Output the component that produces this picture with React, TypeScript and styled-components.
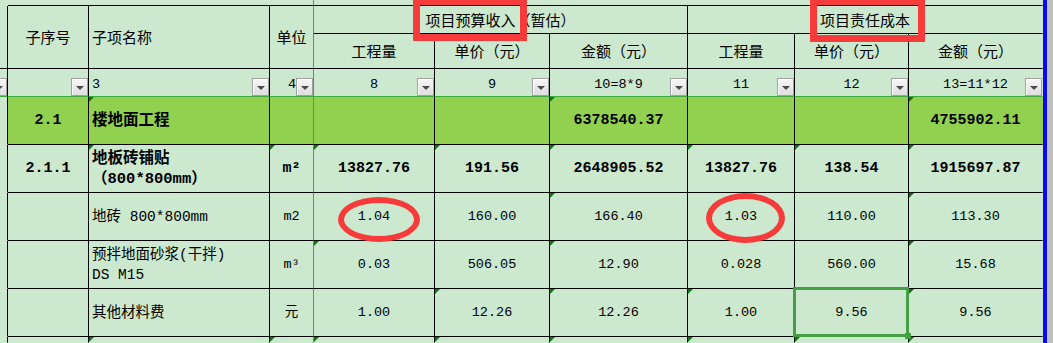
import styled, { createGlobalStyle, css } from "styled-components";

const GlobalStyle = createGlobalStyle`
  html, body {
    margin: 0;
    padding: 0;
  }
  body {
    background: #cce8cf;
    overflow: hidden;
  }
`;

const colWidths = [8, 81, 181, 44, 121, 115, 138, 107, 114, 134];
const rowHeights = [6, 28, 35, 28, 48, 48, 48, 48, 48, 6];

type Line = "black" | "green" | "none";
type Align = "left" | "center" | "right";

const lineColor = (l: Line) =>
  l === "green" ? "#3fa83f" : l === "none" ? "transparent" : "#000";

const Page = styled.div`
  display: flex;
  width: 1053px;
  height: 343px;
  overflow: hidden;
  background: #cce8cf;
`;

const Sheet = styled.div`
  position: relative;
  flex: none;
  display: grid;
  grid-template-columns: ${colWidths.map((w) => `${w}px`).join(" ")};
  grid-template-rows: ${rowHeights.map((h) => `${h}px`).join(" ")};
`;

const FrameEdge = styled.div`
  flex: none;
  width: 4px;
  background: #0a0af2;
`;

const Gutter = styled.div`
  flex: 1;
  background: #c0c0c0;
`;

const Cell = styled.div<{
  $span?: number;
  $rows?: number;
  $right?: Line;
  $bottom?: Line;
  $align?: Align;
  $fill?: "light" | "bright";
  $flag?: boolean;
  $selected?: boolean;
}>`
  position: relative;
  box-sizing: border-box;
  grid-column: span ${(p) => p.$span ?? 1};
  grid-row: span ${(p) => p.$rows ?? 1};
  display: flex;
  align-items: center;
  justify-content: ${(p) =>
    p.$align === "left" ? "flex-start" : p.$align === "right" ? "flex-end" : "center"};
  padding-left: ${(p) => (p.$align === "left" ? "3px" : "0")};
  min-width: 0;
  border-right: 1px solid ${(p) => lineColor(p.$right ?? "black")};
  border-bottom: 1px solid ${(p) => lineColor(p.$bottom ?? "black")};
  background: ${(p) => (p.$fill === "bright" ? "#92d050" : "#cce8cf")};
  color: #000;
  white-space: pre-line;

  ${(p) =>
    p.$flag &&
    css`
      &::before {
        content: "";
        position: absolute;
        top: 0;
        left: 0;
        border-top: 5px solid #0b7a0b;
        border-right: 5px solid transparent;
      }
    `}

  ${(p) =>
    p.$selected &&
    css`
      &::after {
        content: "";
        position: absolute;
        top: -2px;
        left: -2px;
        right: -1px;
        bottom: -1px;
        border: 3px solid #45a045;
        z-index: 2;
        pointer-events: none;
      }
    `}
`;

const HeadCell = styled(Cell)`
  font-family: "Noto Sans CJK SC", sans-serif;
  font-size: 15px;
  line-height: 20px;
`;

const FilterCell = styled(Cell)`
  font-family: "Liberation Mono", monospace;
  font-size: 13.5px;
  padding-top: 3px;
  padding-right: ${(p) => (p.$align === "right" ? "17px" : "0")};
`;

const DataCell = styled(Cell)<{ $strong?: boolean }>`
  font-family: "Liberation Mono", "Noto Sans CJK SC", monospace;
  font-size: ${(p) => (p.$strong ? "15px" : "13.5px")};
  font-weight: ${(p) => (p.$strong ? 700 : 400)};
  line-height: 20px;
`;

const NameCell = styled(DataCell)`
  font-size: ${(p) => (p.$strong ? "15.5px" : "14.5px")};
`;

const DropButton = styled.span`
  position: absolute;
  right: 0;
  bottom: 0;
  width: 17px;
  height: 18px;
  box-sizing: border-box;
  border: 1px solid #a2a2a2;
  background: linear-gradient(#f7f7f7, #dedede);
  box-shadow: inset 1px 1px 0 #fff;

  &::after {
    content: "";
    position: absolute;
    left: 4px;
    top: 7px;
    border-left: 4px solid transparent;
    border-right: 4px solid transparent;
    border-top: 4px solid #4a4a4a;
  }
`;

const FillHandle = styled.span`
  position: absolute;
  right: -3px;
  bottom: -3px;
  width: 6px;
  height: 6px;
  background: #45a045;
  z-index: 3;
`;

const Callout = styled.div<{ $x: number; $y: number; $w: number; $h: number }>`
  position: absolute;
  left: ${(p) => p.$x}px;
  top: ${(p) => p.$y}px;
  width: ${(p) => p.$w}px;
  height: ${(p) => p.$h}px;
  box-sizing: border-box;
  border: 7px solid #f73b3b;
  z-index: 4;
  pointer-events: none;
`;

const Ring = styled(Callout)`
  border-width: 6px;
  border-radius: 50%;
`;

const subHeads = ["工程量", "单价（元）", "金额（元）", "工程量", "单价（元）", "金额（元）"];
const filters = ["", "", "3", "4", "8", "9", "10=8*9", "11", "12", "13=11*12"];

type Row = {
  cells: string[];
  bright?: boolean;
  strong?: boolean;
  flags: number[];
  selected?: number;
};

const rows: Row[] = [
  {
    cells: ["", "2.1", "楼地面工程", "", "", "", "6378540.37", "", "", "4755902.11"],
    bright: true,
    strong: true,
    flags: [2, 6, 9],
  },
  {
    cells: ["", "2.1.1", "地板砖铺贴\n（800*800mm）", "m²", "13827.76", "191.56", "2648905.52", "13827.76", "138.54", "1915697.87"],
    strong: true,
    flags: [2, 3, 4, 5, 6, 7, 8, 9],
  },
  {
    cells: ["", "", "地砖 800*800mm", "m2", "1.04", "160.00", "166.40", "1.03", "110.00", "113.30"],
    flags: [6, 9],
  },
  {
    cells: ["", "", "预拌地面砂浆(干拌)\nDS M15", "m³", "0.03", "506.05", "12.90", "0.028", "560.00", "15.68"],
    flags: [4, 6, 9],
  },
  {
    cells: ["", "", "其他材料费", "元", "1.00", "12.26", "12.26", "1.00", "9.56", "9.56"],
    flags: [5, 6, 7, 9],
    selected: 8,
  },
];

const rightLine = (i: number): Line => (i === 3 ? "green" : i === 9 ? "none" : "black");

export default function App() {
  return (
    <Page>
      <GlobalStyle />
      <Sheet>
        {/* strip above the header */}
        <Cell $right="none" $bottom="none" />
        <Cell $span={3} $right="green" />
        <Cell $span={6} $right="none" />

        {/* header */}
        <HeadCell $rows={2} />
        <HeadCell $rows={2}>子序号</HeadCell>
        <HeadCell $rows={2} $align="left">子项名称</HeadCell>
        <HeadCell $rows={2} $right="green">单位</HeadCell>
        <HeadCell $span={3}>项目预算收入（暂估）</HeadCell>
        <HeadCell $span={3} $right="none">项目责任成本</HeadCell>
        {subHeads.map((t, i) => (
          <HeadCell key={i} $right={i === 5 ? "none" : "black"}>
            {t}
          </HeadCell>
        ))}

        {/* filter row */}
        {filters.map((t, i) => (
          <FilterCell
            key={i}
            $align={i === 2 ? "left" : i === 3 ? "right" : "center"}
            $right={rightLine(i)}
            $bottom="green"
          >
            {t}
            <DropButton />
          </FilterCell>
        ))}

        {/* data rows */}
        {rows.map((row, r) =>
          row.cells.map((t, i) => {
            const common = {
              $right: rightLine(i),
              $bottom: (i === 0 ? "none" : "black") as Line,
              $fill: (row.bright && i > 0 ? "bright" : "light") as "bright" | "light",
              $flag: row.flags.includes(i),
              $strong: row.strong,
              $selected: row.selected === i,
            };
            if (i === 2) {
              return (
                <NameCell key={`${r}-${i}`} {...common} $align="left">
                  {t}
                </NameCell>
              );
            }
            return (
              <DataCell key={`${r}-${i}`} {...common}>
                {t}
                {row.selected === i ? <FillHandle /> : null}
              </DataCell>
            );
          })
        )}

        {/* partial row at the bottom edge */}
        {colWidths.map((_, i) => (
          <Cell key={`tail-${i}`} $right={rightLine(i)} $bottom="none" $flag={i >= 2} />
        ))}

        <Callout $x={413} $y={-2} $w={114} $h={43} />
        <Callout $x={810} $y={-2} $w={115} $h={44} />
        <Ring $x={338} $y={197} $w={82} $h={45} />
        <Ring $x={706} $y={193} $w={79} $h={50} />
      </Sheet>
      <FrameEdge />
      <Gutter />
    </Page>
  );
}
